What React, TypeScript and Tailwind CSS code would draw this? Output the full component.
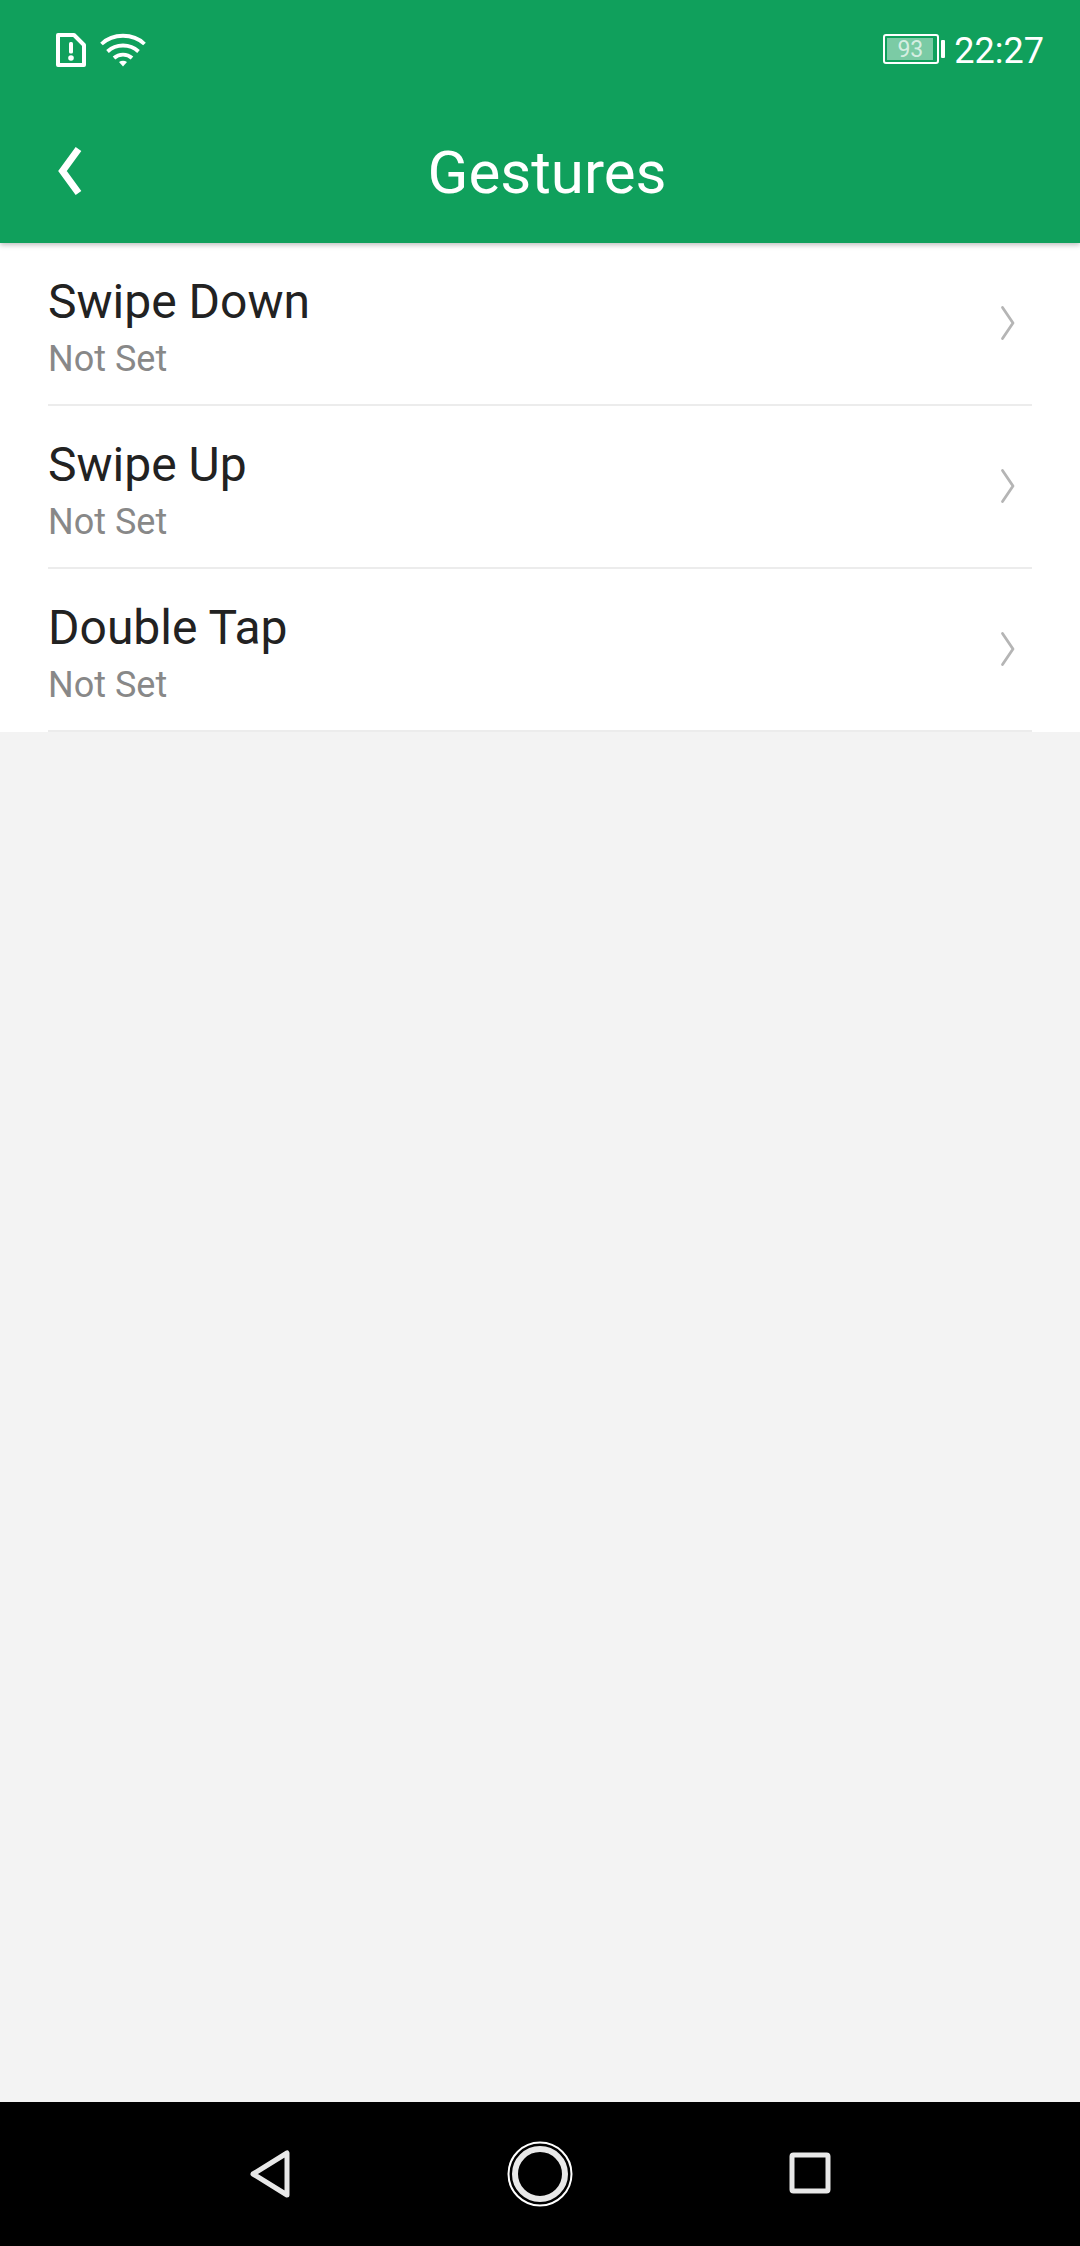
const rows = ["Swipe Down", "Swipe Up", "Double Tap"];

function Row({ title }: { title: string }) {
  return (
    <div className="h-[163px] pl-[48px] pr-[48px]">
      <div className="relative flex h-full items-center justify-between border-b-2 border-[#ececec]">
        <div className="flex flex-col pt-[15px] pb-[7px]">
          <span className="text-[48px] leading-[56px] text-[#222222]">{title}</span>
          <span className="mt-[7px] text-[36px] leading-[44px] text-[#888888]">Not Set</span>
        </div>
        <svg width="16" height="36" viewBox="0 0 16 36" fill="none" className="mr-[16px] mb-[1px]">
          <path d="M2.5 2.5 L13 18 L2.5 33.500" stroke="#b5b5b5" strokeWidth="2.800" strokeLinecap="round" strokeLinejoin="round" />
        </svg>
      </div>
    </div>
  );
}

export default function App() {
  return (
    <div className="flex h-[2246px] w-[1080px] flex-col bg-[#f3f3f3] font-['Roboto',sans-serif]">
      <header className="relative z-10 h-[243px] shrink-0 bg-[#10a05c] shadow-[0_2px_5px_rgba(0,0,0,0.25)]">
        <div className="flex h-[100px] items-center justify-between pl-[56px] pr-[36px]">
          <div className="flex items-center gap-[14px]">
            <svg width="30" height="34" viewBox="0 0 30 34" fill="none">
              <path d="M2 2 H18 L28 12 V32 H2 Z" stroke="#fff" strokeWidth="4" strokeLinejoin="round" />
              <rect x="13" y="9" width="4" height="11.500" rx="1.500" fill="#fff" />
              <circle cx="15" cy="25" r="2.800" fill="#fff" />
            </svg>
            <svg width="46" height="34" viewBox="0 0 46 34" fill="none">
              <path d="M1.500 11 C13 0 33 0 44.500 11" stroke="#fff" strokeWidth="3.800" />
              <path d="M7.500 18.500 C16 10.500 30 10.500 38.500 18.500" stroke="#fff" strokeWidth="3.800" />
              <path d="M14 25 C19 20.500 27 20.500 32 25" stroke="#fff" strokeWidth="3.800" />
              <path d="M19 29 C21.500 27.300 24.500 27.300 27 29 L23 33.500 Z" fill="#fff" />
            </svg>
          </div>
          <div className="flex items-center">
            <div className="mb-[2px] flex h-[30px] w-[56px] items-center rounded-[3px] border-2 border-white p-[2px]">
              <div className="flex h-full w-[46px] items-center justify-center bg-white/45">
                <span className="text-[23px] leading-none text-white/70">93</span>
              </div>
            </div>
            <div className="mb-[2px] ml-[2px] h-[18px] w-[4px] rounded-[1px] bg-white" />
            <span className="mt-[2px] ml-[9px] text-[36px] leading-none text-white">22:27</span>
          </div>
        </div>
        <div className="relative flex h-[143px] items-center justify-center">
          <svg width="24" height="50" viewBox="0 0 24 50" fill="none" className="absolute left-[58px] top-[46px]">
            <path d="M20.500 3 L4.500 25 L20.500 47" stroke="#fff" strokeWidth="7" strokeLinejoin="miter" />
          </svg>
          <span className="mt-[2px] ml-[14px] text-[60px] leading-[70px] text-white">Gestures</span>
        </div>
      </header>
      <main className="bg-white">
        {rows.map((r) => (
          <Row key={r} title={r} />
        ))}
      </main>
      <div className="flex-1" />
      <nav className="relative h-[144px] shrink-0 bg-black">
        <svg width="44" height="50" viewBox="0 0 44 50" fill="none" className="absolute left-[248px] top-[47px]">
          <path d="M5 25 L39 4 V46 Z" stroke="#e8e8e8" strokeWidth="5" strokeLinejoin="round" />
        </svg>
        <svg width="68" height="68" viewBox="0 0 68 68" fill="none" className="absolute left-[506px] top-[38px]">
          <circle cx="34" cy="34" r="31.500" stroke="#fff" strokeWidth="2" />
          <circle cx="34" cy="34" r="25" stroke="#e8e8e8" strokeWidth="6" />
        </svg>
        <svg width="42" height="42" viewBox="0 0 42 42" fill="none" className="absolute left-[789px] top-[50px]">
          <rect x="3" y="3" width="36" height="36" rx="1.500" stroke="#e8e8e8" strokeWidth="5" />
        </svg>
      </nav>
    </div>
  );
}
